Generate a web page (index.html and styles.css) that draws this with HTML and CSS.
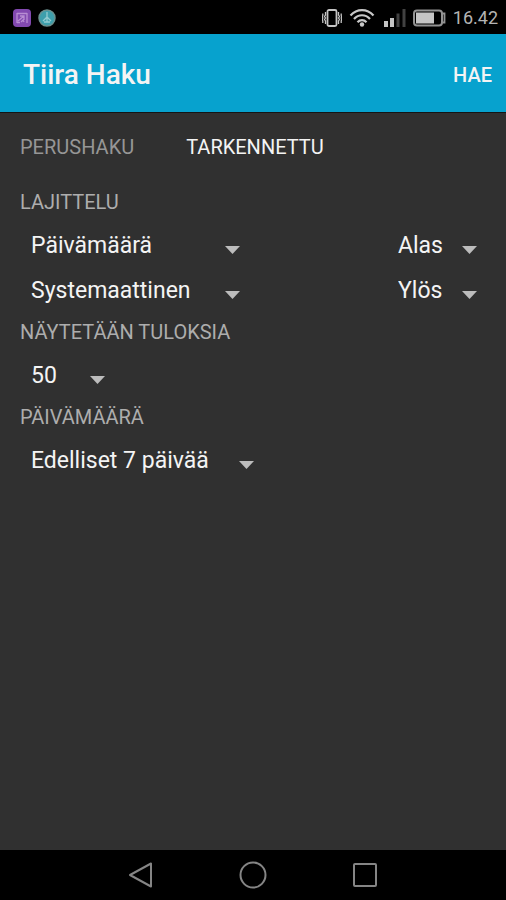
FILE: index.html
```html
<!DOCTYPE html>
<html lang="fi">
<head>
<meta charset="utf-8">
<meta name="viewport" content="width=device-width, initial-scale=1">
<title>Tiira Haku</title>
<link rel="stylesheet" href="styles.css">
</head>
<body>
<div class="status">
  <div class="status-group">
    <svg width="18" height="18" viewBox="0 0 18 18" aria-hidden="true"><rect width="18" height="18" rx="4" fill="#8249b0"/><path d="M4 4.500h10M4 4v10M14 4v10M4 13.500h3M7 7h4v4M5 12l6-5M8 13l2-2 1 2" fill="none" stroke="#b88dd3" stroke-width="1.300"/></svg>
    <svg width="18" height="18" viewBox="0 0 18 18" aria-hidden="true"><circle cx="9" cy="9" r="8" fill="#3d9fac" stroke="#6b918f" stroke-width="1.500"/><path d="M9 3v10M9 8l-4 4M9 8l4 4M6 13h6" fill="none" stroke="#91cbd0" stroke-width="1.300"/></svg>
  </div>
  <div class="status-group">
    <svg width="20" height="18" viewBox="0 0 20 18" fill="none" stroke="#c4c4c4" aria-hidden="true"><rect x="5.500" y="1" width="9" height="16" rx="1.500" stroke-width="1.800"/><path d="M3.500 3v3l-1 1.500 1 1.500-1 1.500 1 1.500v3M.8 4.500v2l-.5 1 .5 1.500-.5 1.500.5 1.500v2M16.500 3v3l1 1.500-1 1.500 1 1.500-1 1.500v3M19.200 4.500v2l.5 1-.5 1.500.5 1.500-.5 1.500v2" stroke-width="1.300"/></svg>
    <svg class="wifi" width="26" height="18" viewBox="0 0 26 18" fill="none" stroke="#c8c8c8" stroke-width="2.200" aria-hidden="true"><path d="M1.500 6.500C8-.6 18-.6 24.500 6.500M5 10c4.500-5 11.500-5 16 0M8.500 13.200c2.600-2.800 6.400-2.800 9 0"/><circle cx="13" cy="15.500" r="2.200" fill="#c8c8c8" stroke="none"/></svg>
    <svg width="22" height="18" viewBox="0 0 22 18" aria-hidden="true"><path fill="#c4c4c4" d="M0 12h4v6H0zM6 9h4v9H6z"/><path fill="#414141" d="M12.500 4.500h3V18h-3zM18.500 0h3v18h-3z"/></svg>
    <svg width="33" height="18" viewBox="0 0 33 18" aria-hidden="true"><rect x="1" y="1.500" width="28" height="15" rx="3" fill="none" stroke="#929292" stroke-width="2"/><path fill="#c5c5c5" d="M3 3.500h18v11H3z"/><path d="M29 4.500h2.500v9H29" fill="none" stroke="#929292" stroke-width="1.800"/></svg>
    <span class="clock">16.42</span>
  </div>
</div>
<header class="bar">
  <h1>Tiira Haku</h1>
  <button type="submit" form="search" class="search">HAE</button>
</header>
<main>
  <nav class="tabs">
    <a href="#perushaku">PERUSHAKU</a>
    <a href="#search" class="active" aria-current="page">TARKENNETTU</a>
  </nav>
  <form id="search">
    <h2>LAJITTELU</h2>
    <div class="row">
      <span class="field sort"><select aria-label="Lajittelu 1"><option>Päivämäärä</option></select></span>
      <span class="field order"><select aria-label="Suunta 1"><option>Alas</option></select></span>
    </div>
    <div class="row">
      <span class="field sort"><select aria-label="Lajittelu 2"><option>Systemaattinen</option></select></span>
      <span class="field order"><select aria-label="Suunta 2"><option>Ylös</option></select></span>
    </div>
    <h2><label for="count">NÄYTETÄÄN TULOKSIA</label></h2>
    <div class="row">
      <span class="field count"><select id="count"><option>50</option></select></span>
    </div>
    <h2><label for="date">PÄIVÄMÄÄRÄ</label></h2>
    <div class="row">
      <span class="field date"><select id="date"><option>Edelliset 7 päivää</option></select></span>
    </div>
  </form>
</main>
<footer class="system-nav">
  <button type="button" aria-label="Takaisin"><svg width="28" height="28" viewBox="0 0 28 28"><path d="M3 14 24 2.500v23z"/></svg></button>
  <button type="button" aria-label="Koti"><svg width="28" height="28" viewBox="0 0 28 28"><circle cx="14" cy="14" r="12.500"/></svg></button>
  <button type="button" aria-label="Viimeisimmät"><svg width="28" height="28" viewBox="0 0 28 28"><rect x="3" y="3" width="22" height="22" rx="1"/></svg></button>
</footer>
</body>
</html>
```
FILE: styles.css
```css
* {
  box-sizing: border-box;
}

body {
  margin: 0;
  min-height: 100vh;
  display: flex;
  flex-direction: column;
  background: #303030;
  color: #f4f4f4;
  font-family: Roboto, "Liberation Sans", sans-serif;
}

button,
select {
  margin: 0;
  padding: 0;
  border: 0;
  background: none;
  color: inherit;
  font: inherit;
}

svg {
  display: block;
}

.status {
  display: flex;
  justify-content: space-between;
  align-items: center;
  height: 34px;
  padding: 1px 8px 0 13px;
  background: #000;
}

.status-group {
  display: flex;
  align-items: center;
  gap: 7px;
}

.wifi {
  margin-right: 2px;
}

.clock {
  color: #b4b4b4;
  font-size: 18px;
  line-height: 24px;
}

.bar {
  display: flex;
  justify-content: space-between;
  align-items: center;
  height: 79px;
  padding: 3px 14px 0 23px;
  background: #07a2ce;
  border-bottom: 1px solid #151515;
}

h1 {
  margin: 0;
  font-size: 28px;
  font-weight: 500;
  line-height: 32px;
}

.search {
  font-size: 20px;
  font-weight: 500;
  line-height: 32px;
}

main {
  flex: 1;
  padding: 12px 29px 12px 20px;
}

.tabs {
  display: flex;
  gap: 52px;
  padding-bottom: 12px;
  font-size: 20px;
  line-height: 45px;
}

.tabs a {
  color: #969696;
  text-decoration: none;
}

.tabs .active {
  color: #f4f4f4;
}

h2 {
  margin: 0;
  color: #adadad;
  font-size: 20px;
  font-weight: 400;
  line-height: 40px;
}

.row {
  display: flex;
  justify-content: space-between;
  padding-left: 11px;
}

.field {
  display: flex;
  position: relative;
}

.field::after {
  content: "";
  position: absolute;
  right: 0;
  bottom: 13px;
  width: 15px;
  height: 8px;
  background: #bcbcbc;
  clip-path: polygon(0 0, 100% 0, 50% 100%);
  pointer-events: none;
}

.field select {
  appearance: none;
  width: 100%;
  height: 45px;
  padding-top: 2px;
  font-size: 23px;
}

.sort {
  width: 209px;
}

.order {
  width: 79px;
}

.count {
  width: 74px;
}

.date {
  width: 223px;
}

.system-nav {
  display: flex;
  justify-content: center;
  align-items: center;
  gap: 84px;
  height: 50px;
  background: #000;
}

.system-nav svg {
  fill: none;
  stroke: #858585;
  stroke-width: 2;
  stroke-linejoin: round;
}
```
